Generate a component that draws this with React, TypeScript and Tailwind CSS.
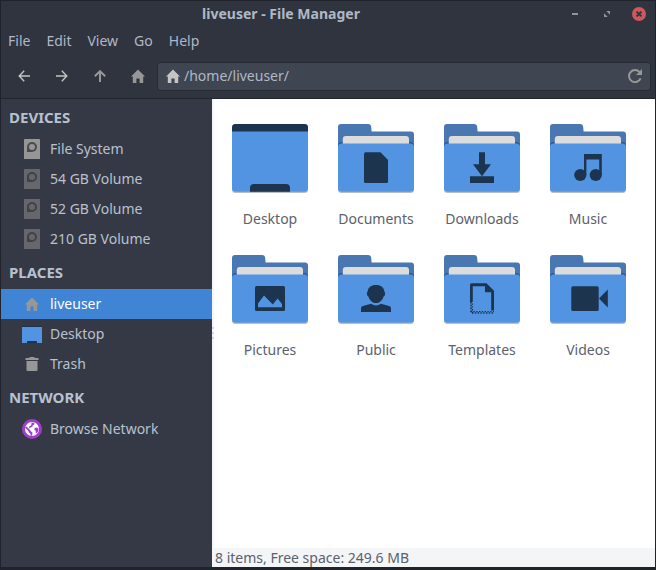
import type { ReactNode } from "react";

const ink = "#1d344f";

function HomeIcon({ className }: { className: string }) {
  return (
    <svg className={className} width="14" height="14" viewBox="0 0 14 14" fill="currentColor">
      <path d="M7 0.5 L14 7.5 H12.2 V14 H8.6 V9.5 H5.4 V14 H1.8 V7.5 H0 Z" />
    </svg>
  );
}

function ArrowIcon({ className }: { className: string }) {
  return (
    <svg className={className} width="12" height="12" viewBox="0 0 12 12" fill="none" stroke="currentColor">
      <path d="M1 6 H12 M6.2 0.8 L1.2 6 L6.2 11.2" />
    </svg>
  );
}

function DriveIcon({ dim }: { dim?: boolean }) {
  return (
    <svg className={dim ? "opacity-50" : ""} width="16" height="20" viewBox="0 0 16 20">
      <rect width="16" height="20" rx="0.6" fill="#969696" />
      <path d="M3 8 A5 5 0 1 1 8 13 H3 Z" fill="#4b4b4b" />
      <circle cx="8" cy="8" r="3" fill="#969696" />
    </svg>
  );
}

function MiniDesktopIcon() {
  return (
    <svg width="20" height="17" viewBox="0 0 20 17">
      <rect width="20" height="17" rx="0.6" fill="#5294e2" />
      <path d="M0 0 H20 V1 H0 Z M5 17 V15.6 Q5 15 5.6 15 H14.4 Q15 15 15 15.6 V17 Z" fill={ink} />
    </svg>
  );
}

function TrashIcon() {
  return (
    <svg width="14" height="14" viewBox="0 0 14 14" fill="#979797">
      <path d="M4.5 0 H9.5 V1 H13.5 V3 H0.5 V1 H4.5 Z M1.5 4 H12.5 V13 Q12.5 14 11.5 14 H2.5 Q1.5 14 1.5 13 Z" />
    </svg>
  );
}

function GlobeIcon() {
  return (
    <svg width="20" height="20" viewBox="0 0 20 20">
      <circle cx="10" cy="10" r="10" fill="#9f3ecb" />
      <circle cx="10" cy="10" r="7" fill="#fff" />
      <path
        d="M3 8.6 L4.6 7.4 L8.4 11.4 L9 12.6 L10.4 13.2 L10.2 16.8 L8.6 16.7 L8.4 14.6 L6.8 13.4 L6.4 12 Z M9.6 3.4 L12.4 4 L12.2 5.6 L10.6 6.4 L10.4 7.8 L8.6 8.4 L7.8 9.6 L6.8 8.6 L7.8 7 L9.2 6.4 Z M12.6 9 L14.6 8.4 L16.6 9.8 L16.2 12.2 L14.8 14.2 L13.6 13.6 L13.8 11.8 L12.4 11 Z"
        fill="#9f3ecb"
      />
    </svg>
  );
}

function FolderIcon({ children }: { children: ReactNode }) {
  return (
    <svg width="76" height="69" viewBox="0 0 76 69">
      <path d="M0 65 V3 Q0 0 3 0 H30 Q33 0 33.2 3 L33.6 7.4 H73 Q76 7.4 76 10.4 V65 Z" fill="#4877b1" />
      <path d="M0 22 Q0 18 4 18 H72 Q76 18 76 22 Z" fill="#30568a" />
      <path d="M4.8 20 V15 Q4.8 12 7.8 12 H68 Q71 12 71 15 V20 Z" fill="#dcdcdc" />
      <rect y="21" width="76" height="48" rx="3.5" fill="#b9bdc4" />
      <rect y="19.4" width="76" height="48.4" rx="3.5" fill="#5294e2" />
      {children}
    </svg>
  );
}

function DesktopIcon() {
  return (
    <svg width="76" height="69" viewBox="0 0 76 69">
      <rect y="10" width="76" height="59" rx="3.5" fill="#b9bdc4" />
      <rect width="76" height="67.8" rx="3.5" fill="#5294e2" />
      <path d="M0 7.5 V3.5 Q0 0 3.5 0 H72.5 Q76 0 76 3.5 V7.5 Z" fill={ink} />
      <path d="M18 67.8 V64 Q18 60 22 60 H54 Q58 60 58 64 V67.8 Z" fill={ink} />
    </svg>
  );
}

const files: { name: string; icon: ReactNode }[] = [
  { name: "Desktop", icon: <DesktopIcon /> },
  {
    name: "Documents",
    icon: (
      <FolderIcon>
        <path d="M27.5 28.3 H42.5 L50 36 V57.5 Q50 59 48.5 59 H27.5 Q26 59 26 57.5 V29.8 Q26 28.3 27.5 28.3 Z" fill={ink} />
      </FolderIcon>
    ),
  },
  {
    name: "Downloads",
    icon: (
      <FolderIcon>
        <path d="M35 28.3 H41 V40.2 H47 L38 52.2 L29 40.2 H35 Z M26 52.3 H50 V59 H26 Z" fill={ink} />
      </FolderIcon>
    ),
  },
  {
    name: "Music",
    icon: (
      <FolderIcon>
        <path d="M34 30 H51.8 V51 H49.2 V35.6 H36.4 V51 H34 Z" fill={ink} />
        <circle cx="30.3" cy="51" r="6.1" fill={ink} />
        <circle cx="45.7" cy="51" r="6.1" fill={ink} />
      </FolderIcon>
    ),
  },
  {
    name: "Pictures",
    icon: (
      <FolderIcon>
        <rect x="23" y="31" width="30" height="25" rx="1.5" fill={ink} />
        <path d="M26 52.3 V48.6 L32 40.4 L40.8 49.6 L45.6 43.6 L50 49 V52.3 Z" fill="#5294e2" />
      </FolderIcon>
    ),
  },
  {
    name: "Public",
    icon: (
      <FolderIcon>
        <path
          d="M38 30 C43 30 46 32.6 46.3 36.2 Q47.8 37.6 46.8 40.4 L45.6 41.4 C44.4 45.4 41.4 48 38 48 C34.6 48 31.6 45.4 30.4 41.4 L29.2 40.4 Q28.2 37.6 29.7 36.2 C30 32.6 33 30 38 30 Z"
          fill={ink}
        />
        <path d="M23 57 V53 Q23 51.4 25 51 L33 48.8 Q38 52.4 43 48.8 L51 51 Q53 51.4 53 53 V57 Z" fill={ink} />
      </FolderIcon>
    ),
  },
  {
    name: "Templates",
    icon: (
      <FolderIcon>
        <path d="M26 47 V29.8 Q26 28.3 27.5 28.3 H42.5 L50 35.8 V55.5 H47.2 V37.2 H41 V31.2 H28.8 V47 Z" fill={ink} />
        <path d="M27 47 V58" stroke={ink} strokeWidth="1.6" strokeDasharray="1.4 1.4" />
        <path d="M28.4 48.4 V58" stroke={ink} strokeWidth="1.4" strokeDasharray="1.4 1.4" />
        <path d="M26.6 56.6 H50" stroke={ink} strokeWidth="1.4" strokeDasharray="1.4 1.4" />
        <path d="M28 58 H50" stroke={ink} strokeWidth="1.4" strokeDasharray="1.4 1.4" />
      </FolderIcon>
    ),
  },
  {
    name: "Videos",
    icon: (
      <FolderIcon>
        <rect x="21.3" y="31.3" width="27.4" height="24.7" rx="1.6" fill={ink} />
        <path d="M49 43.6 L57.8 34.6 V52.4 Z" fill={ink} />
      </FolderIcon>
    ),
  },
];

const sections: { title: string; items: { name: string; icon: ReactNode; active?: boolean }[] }[] = [
  {
    title: "DEVICES",
    items: [
      { name: "File System", icon: <DriveIcon /> },
      { name: "54 GB Volume", icon: <DriveIcon dim /> },
      { name: "52 GB Volume", icon: <DriveIcon dim /> },
      { name: "210 GB Volume", icon: <DriveIcon dim /> },
    ],
  },
  {
    title: "PLACES",
    items: [
      { name: "liveuser", icon: <HomeIcon className="text-[#979797]" />, active: true },
      { name: "Desktop", icon: <MiniDesktopIcon /> },
      { name: "Trash", icon: <TrashIcon /> },
    ],
  },
  {
    title: "NETWORK",
    items: [{ name: "Browse Network", icon: <GlobeIcon /> }],
  },
];

function TitleBar() {
  return (
    <div className="flex h-[26px] items-center pr-2">
      <h1 className="flex-1 text-center font-bold">liveuser - File Manager</h1>
      <div className="flex items-center gap-4 pl-1.5">
        <button aria-label="Minimize" className="flex size-4 items-center justify-center">
          <svg width="6" height="2" viewBox="0 0 6 2">
            <rect width="6" height="2" fill="#90939b" />
          </svg>
        </button>
        <button aria-label="Maximize" className="flex size-4 items-center justify-center">
          <svg width="6" height="6" viewBox="0 0 6 6" fill="#90939b">
            <path d="M2.2 0 H6 V3.8 Z M0 2.2 L3.8 6 H0 Z" />
          </svg>
        </button>
        <button aria-label="Close" className="flex size-4 items-center justify-center">
          <svg width="14" height="14" viewBox="0 0 14 14">
            <circle cx="7" cy="7" r="7" fill="#cc575d" />
            <path d="M4.6 4.6 L9.4 9.4 M9.4 4.6 L4.6 9.4" stroke="#2f343f" strokeWidth="2" />
          </svg>
        </button>
      </div>
    </div>
  );
}

function Toolbar() {
  return (
    <div className="flex h-11 items-center px-1">
      <button aria-label="Back" className="flex h-8 w-[38px] items-center justify-center">
        <ArrowIcon className="stroke-[1.4] text-[#c4c4c4]" />
      </button>
      <button aria-label="Forward" className="flex h-8 w-[38px] items-center justify-center">
        <ArrowIcon className="rotate-180 stroke-[1.4] text-[#c4c4c4]" />
      </button>
      <button aria-label="Up" className="flex h-8 w-[38px] items-center justify-center">
        <ArrowIcon className="rotate-90 stroke-2 text-[#979797]" />
      </button>
      <button aria-label="Home" className="flex h-8 w-[38px] items-center justify-center">
        <HomeIcon className="text-[#979797]" />
      </button>
      <div className="flex h-[29px] flex-1 items-center rounded-[3px] border border-[#262a33] bg-[#404552] px-2">
        <HomeIcon className="text-[#c4c4c4]" />
        <input
          aria-label="Location"
          defaultValue="/home/liveuser/"
          className="ml-1 min-w-0 flex-1 bg-transparent outline-none"
        />
        <button aria-label="Reload">
          <svg width="14" height="14" viewBox="0 0 14 14">
            <path d="M11.6 3.2 A6 6 0 1 0 12.6 9.4" fill="none" stroke="#979797" strokeWidth="2" />
            <path d="M14 0 V6 H8 Z" fill="#979797" />
          </svg>
        </button>
      </div>
    </div>
  );
}

function Sidebar() {
  return (
    <nav className="w-[211px] shrink-0 bg-[#353945] text-[#b8c1cf]">
      {sections.map((section) => (
        <section key={section.title}>
          <h2 className="flex h-[35px] items-center pl-2 text-[15px] font-bold">{section.title}</h2>
          {section.items.map((item) => (
            <a
              key={item.name}
              href="#"
              className={
                item.active
                  ? "flex h-[30px] items-center bg-[#4084d6] pl-5 text-white"
                  : "flex h-[30px] items-center pl-5"
              }
            >
              <span className="flex w-[22px] justify-center">{item.icon}</span>
              <span className="ml-[7px]">{item.name}</span>
            </a>
          ))}
        </section>
      ))}
    </nav>
  );
}

export default function App() {
  return (
    <div className="flex min-h-screen flex-col border border-b-3 border-[#20232b] bg-[#2f343f] font-['Noto_Sans',sans-serif] text-[14px] leading-5 text-[#afb8c6]">
      <header className="border-b border-[#22252d]">
        <TitleBar />
        <div className="flex h-[27px] items-center gap-4 pl-[7px]">
          <button>File</button>
          <button>Edit</button>
          <button>View</button>
          <button>Go</button>
          <button>Help</button>
        </div>
        <Toolbar />
      </header>
      <div className="flex flex-1">
        <Sidebar />
        <div className="flex w-0.5 flex-col justify-center gap-[3px] bg-[#f5f6f7]">
          <span className="h-0.5 bg-[#d3d8e2]" />
          <span className="h-0.5 bg-[#d3d8e2]" />
          <span className="h-0.5 bg-[#d3d8e2]" />
        </div>
        <main className="flex min-w-0 flex-1 flex-col bg-white text-[#5c616c]">
          <div className="flex flex-1 flex-wrap content-start pt-[25px] pl-[3px]">
            {files.map((file) => (
              <button key={file.name} className="flex h-[131px] w-[106px] flex-col items-center gap-4">
                {file.icon}
                <span>{file.name}</span>
              </button>
            ))}
          </div>
          <footer className="h-[19px] bg-[#f4f5f7] pl-px leading-[19px]">8 items, Free space: 249.6 MB</footer>
        </main>
      </div>
    </div>
  );
}
